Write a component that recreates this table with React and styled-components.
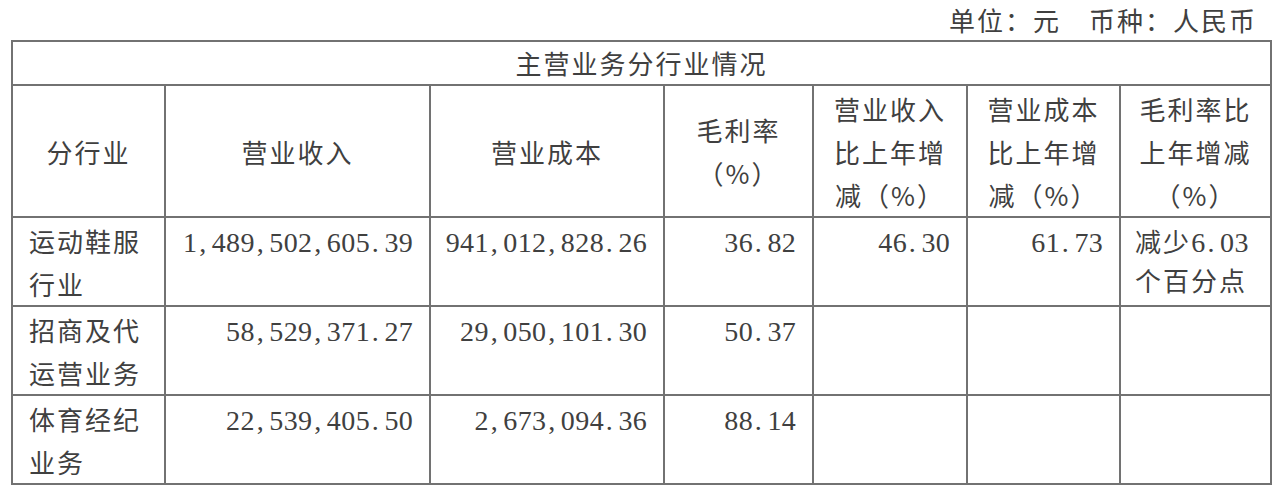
import React from "react";
import styled, { createGlobalStyle } from "styled-components";

const Global = createGlobalStyle`
  html, body { margin: 0; padding: 0; background: #ffffff; }
  body {
    font-family: "Noto Sans CJK SC", "Noto Sans", sans-serif;
    color: #404040;
  }
`;

const Page = styled.div`
  width: 1280px;
  height: 486px;
  box-sizing: border-box;
  padding-left: 11px;
  display: flex;
  flex-direction: column;
  overflow: hidden;
`;

const UnitLine = styled.div`
  flex: 0 0 40px;
  height: 40px;
  display: flex;
  align-items: center;
  justify-content: flex-end;
  padding-right: 23px;
  font-size: 26px;
  letter-spacing: 2px;
  line-height: 1;
`;

const Table = styled.table`
  flex: 0 0 auto;
  width: 1261px;
  border-collapse: collapse;
  table-layout: fixed;
  font-size: 26px;
  letter-spacing: 2px;
`;

const Col = styled.col`
  width: ${(p) => p.$w}px;
`;

const Row = styled.tr`
  height: ${(p) => p.$h}px;
`;

const BaseCell = styled.td`
  border: 2px solid #727272;
  box-sizing: border-box;
  padding: 0;
`;

const TitleCell = styled(BaseCell)`
  text-align: center;
  vertical-align: middle;
  line-height: 1;
`;

const HeadCell = styled(BaseCell)`
  text-align: center;
  vertical-align: middle;
  line-height: 43px;
`;

const LabelCell = styled(BaseCell)`
  text-align: left;
  vertical-align: top;
  line-height: 43px;
  padding: 1px 8px 0 16px;
`;

const NumCell = styled(BaseCell)`
  text-align: right;
  vertical-align: top;
  line-height: 43px;
  padding: 1px 16px 0 0;
`;

const NoteCell = styled(BaseCell)`
  text-align: left;
  vertical-align: top;
  line-height: 37px;
  padding: 4px 4px 0 14px;
`;

const NumWrap = styled.span`
  white-space: nowrap;
  letter-spacing: 0;
`;

const Glyph = styled.span`
  display: inline-block;
  width: 14.4px;
  text-align: ${(p) => (p.$punct ? "left" : "center")};
  padding-left: ${(p) => (p.$punct ? "2px" : "0")};
  box-sizing: border-box;
  font-family: "Liberation Serif", "DejaVu Serif", serif;
  font-size: 28px;
  letter-spacing: 0;
`;

function Num({ value }) {
  return (
    <NumWrap>
      {[...value].map((c, i) => (
        <Glyph key={i} $punct={c === "," || c === "."}>
          {c}
        </Glyph>
      ))}
    </NumWrap>
  );
}

const cols = [153, 265, 234, 149, 154, 153, 151];

const rows = [
  {
    name: "运动鞋服行业",
    revenue: "1,489,502,605.39",
    cost: "941,012,828.26",
    margin: "36.82",
    revChange: "46.30",
    costChange: "61.73",
    note: true,
    h: 89,
  },
  {
    name: "招商及代运营业务",
    revenue: "58,529,371.27",
    cost: "29,050,101.30",
    margin: "50.37",
    h: 88,
  },
  {
    name: "体育经纪业务",
    revenue: "22,539,405.50",
    cost: "2,673,094.36",
    margin: "88.14",
    h: 88,
  },
];

export default function App() {
  return (
    <>
      <Global />
      <Page>
        <UnitLine>单位：元　币种：人民币</UnitLine>
        <Table>
          <colgroup>
            {cols.map((w, i) => (
              <Col key={i} $w={w} />
            ))}
          </colgroup>
          <tbody>
            <Row $h={44}>
              <TitleCell colSpan={7}>主营业务分行业情况</TitleCell>
            </Row>
            <Row $h={132}>
              <HeadCell>分行业</HeadCell>
              <HeadCell>营业收入</HeadCell>
              <HeadCell>营业成本</HeadCell>
              <HeadCell>
                毛利率
                <br />
                （%）
              </HeadCell>
              <HeadCell>
                营业收入
                <br />
                比上年增
                <br />
                减（%）
              </HeadCell>
              <HeadCell>
                营业成本
                <br />
                比上年增
                <br />
                减（%）
              </HeadCell>
              <HeadCell>
                毛利率比
                <br />
                上年增减
                <br />
                （%）
              </HeadCell>
            </Row>
            {rows.map((r) => (
              <Row key={r.name} $h={r.h}>
                <LabelCell>{r.name}</LabelCell>
                <NumCell>
                  <Num value={r.revenue} />
                </NumCell>
                <NumCell>
                  <Num value={r.cost} />
                </NumCell>
                <NumCell>
                  <Num value={r.margin} />
                </NumCell>
                <NumCell>{r.revChange ? <Num value={r.revChange} /> : null}</NumCell>
                <NumCell>{r.costChange ? <Num value={r.costChange} /> : null}</NumCell>
                {r.note ? (
                  <NoteCell>
                    减少<Num value="6.03" />
                    <br />
                    个百分点
                  </NoteCell>
                ) : (
                  <NoteCell />
                )}
              </Row>
            ))}
          </tbody>
        </Table>
      </Page>
    </>
  );
}
